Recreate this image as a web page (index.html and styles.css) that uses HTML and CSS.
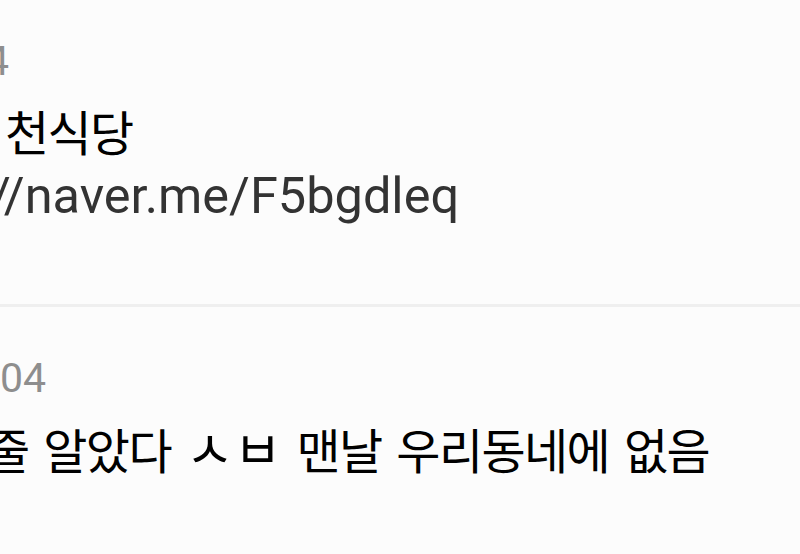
FILE: index.html
```html
<!DOCTYPE html>
<html lang="ko">
<head>
    <meta name="viewport" content="width=device-width, initial-scale=1">
    <title>메모</title>
    <link rel="stylesheet" href="styles.css">
</head>
<body>
<!-- 확대된 메모 목록, 왼쪽이 잘려 보이는 상태 -->
<div class="memo-list">
    <div class="memo">
        <div class="memo-date date-cut">4</div>
        <div class="memo-title title-first">천식당</div>
        <div class="memo-link"><span class="slash">/</span>/naver.me/F5bgdleq</div>
    </div>
    <div class="memo">
        <div class="memo-date">04</div>
        <div class="memo-title title-cut">줄 알았다 <span class="jamo"><span>ㅅ</span><span>ㅂ</span></span> 맨날 우리동네에 없음</div>
    </div>
</div>
</body>
</html>
```

FILE: styles.css
```css
body {
    margin: 0;
    background-color: #fcfcfc;
    font-family: Roboto, "Noto Sans CJK KR", sans-serif;
    overflow: hidden;
}

.memo-list {
    margin-top: -10px;
}

.memo {
    padding: 46px 0 73px;
    border-bottom: 3px solid #efefef;
    white-space: nowrap;
}

.memo:last-child {
    border-bottom: none;
}

.memo-date {
    font-size: 41px;
    line-height: 50px;
    color: #8e8e8e;
    margin-bottom: 14px;
}

.date-cut {
    text-indent: -14px;
}

.memo-title {
    font-family: "Noto Sans CJK KR", sans-serif;
    font-size: 48px;
    line-height: 60px;
    letter-spacing: -1.6px;
    word-spacing: 2.9px;
    color: #000;
}

.title-first {
    text-indent: 5px;
}

.title-cut {
    text-indent: -14px;
}

.jamo {
    font-size: 52px;
    letter-spacing: 0;
}

.jamo span {
    display: inline-block;
    width: 48px;
    text-align: center;
    text-indent: 0;
}

.memo-link {
    font-size: 50.5px;
    line-height: 71px;
    color: #333;
    text-indent: -10px;
}

.slash {
    letter-spacing: -7px;
}
```
